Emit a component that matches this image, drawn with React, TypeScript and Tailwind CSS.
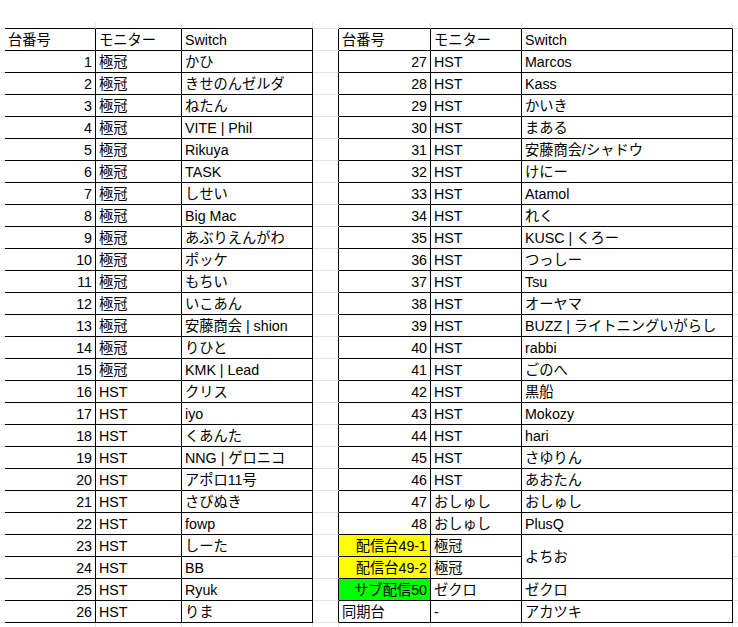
import React from "react";

type Cell = {
  text?: string;
  align?: "left" | "right";
  bg?: string;
  span2?: boolean;
  center?: boolean;
};

const leftRows: [string, string, string][] = [
  ["1", "極冠", "かひ"],
  ["2", "極冠", "きせのんゼルダ"],
  ["3", "極冠", "ねたん"],
  ["4", "極冠", "VITE | Phil"],
  ["5", "極冠", "Rikuya"],
  ["6", "極冠", "TASK"],
  ["7", "極冠", "しせい"],
  ["8", "極冠", "Big Mac"],
  ["9", "極冠", "あぶりえんがわ"],
  ["10", "極冠", "ポッケ"],
  ["11", "極冠", "もちい"],
  ["12", "極冠", "いこあん"],
  ["13", "極冠", "安藤商会 | shion"],
  ["14", "極冠", "りひと"],
  ["15", "極冠", "KMK | Lead"],
  ["16", "HST", "クリス"],
  ["17", "HST", "iyo"],
  ["18", "HST", "くあんた"],
  ["19", "HST", "NNG | ゲロニコ"],
  ["20", "HST", "アポロ11号"],
  ["21", "HST", "さびぬき"],
  ["22", "HST", "fowp"],
  ["23", "HST", "しーた"],
  ["24", "HST", "BB"],
  ["25", "HST", "Ryuk"],
  ["26", "HST", "りま"],
];

const rightRows: [string, string, string][] = [
  ["27", "HST", "Marcos"],
  ["28", "HST", "Kass"],
  ["29", "HST", "かいき"],
  ["30", "HST", "まある"],
  ["31", "HST", "安藤商会/シャドウ"],
  ["32", "HST", "けにー"],
  ["33", "HST", "Atamol"],
  ["34", "HST", "れく"],
  ["35", "HST", "KUSC | くろー"],
  ["36", "HST", "つっしー"],
  ["37", "HST", "Tsu"],
  ["38", "HST", "オーヤマ"],
  ["39", "HST", "BUZZ | ライトニングいがらし"],
  ["40", "HST", "rabbi"],
  ["41", "HST", "ごのへ"],
  ["42", "HST", "黒船"],
  ["43", "HST", "Mokozy"],
  ["44", "HST", "hari"],
  ["45", "HST", "さゆりん"],
  ["46", "HST", "あおたん"],
  ["47", "おしゅし", "おしゅし"],
  ["48", "おしゅし", "PlusQ"],
];

function GridCell({
  cell,
  rightBlack,
  bottomBlack,
}: {
  cell: Cell;
  rightBlack: boolean;
  bottomBlack: boolean;
}) {
  const cls = [
    "flex overflow-hidden whitespace-nowrap px-[3px] text-[14.25px] leading-[16px] text-black border-r border-b",
    rightBlack ? "border-r-black" : "border-r-[#e2e2e2]",
    bottomBlack ? "border-b-black" : "border-b-[#e2e2e2]",
    cell.align === "right" ? "justify-end" : "justify-start",
    cell.center ? "items-center" : "items-end pb-[2px]",
    cell.span2 ? "row-span-2" : "",
    cell.bg === "yellow" ? "bg-[#ffff00]" : cell.bg === "green" ? "bg-[#00ff00]" : "bg-white",
  ].join(" ");
  return <div className={cls}>{cell.text}</div>;
}

type RowSpec =
  | { kind: "blank" }
  | { kind: "above" }
  | { kind: "trail" }
  | { kind: "table"; left: Cell[]; right: Cell[] };

export default function App() {
  const rows: RowSpec[] = [];
  rows.push({ kind: "blank" });
  rows.push({ kind: "above" });
  rows.push({
    kind: "table",
    left: [{ text: "台番号" }, { text: "モニター" }, { text: "Switch" }],
    right: [{ text: "台番号" }, { text: "モニター" }, { text: "Switch" }],
  });
  const rightCells: Cell[][] = rightRows.map((r) => [
    { text: r[0], align: "right" },
    { text: r[1] },
    { text: r[2] },
  ]);
  rightCells.push([
    { text: "配信台49-1", align: "right", bg: "yellow" },
    { text: "極冠" },
    { text: "よちお", span2: true, center: true },
  ]);
  rightCells.push([{ text: "配信台49-2", align: "right", bg: "yellow" }, { text: "極冠" }]);
  rightCells.push([
    { text: "サブ配信50", align: "right", bg: "green" },
    { text: "ゼクロ" },
    { text: "ゼクロ" },
  ]);
  rightCells.push([{ text: "同期台" }, { text: "-" }, { text: "アカツキ" }]);
  leftRows.forEach((r, i) => {
    rows.push({
      kind: "table",
      left: [{ text: r[0], align: "right" }, { text: r[1] }, { text: r[2] }],
      right: rightCells[i],
    });
  });
  rows.push({ kind: "trail" });

  const out: React.ReactNode[] = [];
  rows.forEach((row, ri) => {
    if (row.kind === "blank") {
      for (let c = 0; c < 9; c++) out.push(<div key={`b${c}`} className="bg-white" />);
      return;
    }
    if (row.kind === "above" || row.kind === "trail") {
      for (let c = 0; c < 9; c++) {
        const tableCol = c !== 0 && c !== 4 && c !== 8;
        out.push(
          <GridCell
            key={`${ri}-${c}`}
            cell={{}}
            rightBlack={false}
            bottomBlack={row.kind === "above" && tableCol}
          />
        );
      }
      return;
    }
    out.push(<GridCell key={`${ri}-0`} cell={{}} rightBlack={true} bottomBlack={false} />);
    row.left.forEach((cell, i) =>
      out.push(<GridCell key={`${ri}-l${i}`} cell={cell} rightBlack={true} bottomBlack={true} />)
    );
    out.push(<GridCell key={`${ri}-4`} cell={{}} rightBlack={true} bottomBlack={false} />);
    row.right.forEach((cell, i) =>
      out.push(<GridCell key={`${ri}-r${i}`} cell={cell} rightBlack={true} bottomBlack={true} />)
    );
    out.push(<GridCell key={`${ri}-8`} cell={{}} rightBlack={false} bottomBlack={false} />);
  });

  return (
    <div
      className="w-[738px] h-[627px] overflow-hidden bg-white"
      style={{ fontFamily: '"Liberation Sans", Arial, "Noto Sans CJK JP", sans-serif' }}
    >
      <div className="grid grid-cols-[5px_91px_86px_131px_26px_92px_91px_211px_5px] grid-rows-[23px_6px_repeat(28,22px)]">
        {out}
      </div>
    </div>
  );
}
